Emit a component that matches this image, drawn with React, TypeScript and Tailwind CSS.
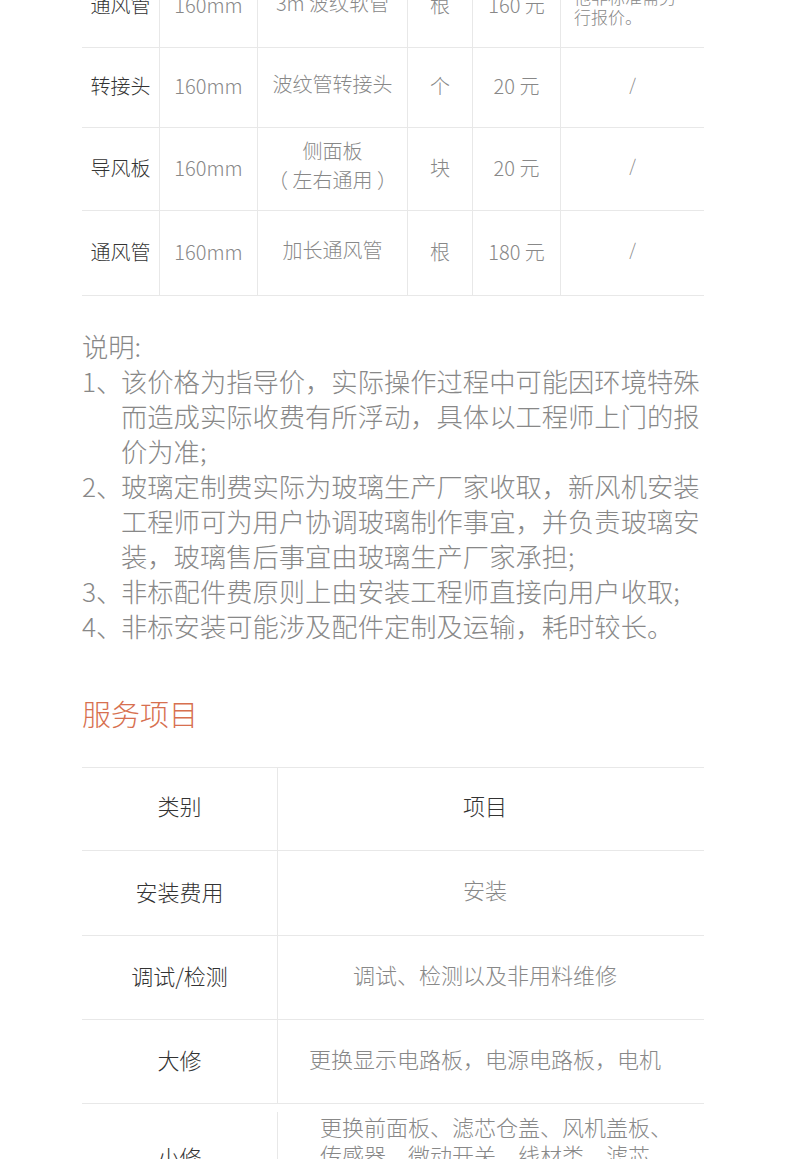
import React from 'react';

type PartRow = {
  name: string;
  size: string;
  desc: React.ReactNode;
  unit: string;
  price: string;
  note: string;
  height: string;
  noteClass?: string;
};

const partRows: PartRow[] = [
  {
    name: '通风管',
    size: '160mm',
    desc: '3m 波纹软管',
    unit: '根',
    price: '160 元',
    note: '如需加长，其他非标准需另行报价。',
    height: 'h-[83px]',
    noteClass: 'pb-[19px] justify-start text-left',
  },
  { name: '转接头', size: '160mm', desc: '波纹管转接头', unit: '个', price: '20 元', note: '/', height: 'h-[80px]' },
  {
    name: '导风板',
    size: '160mm',
    desc: (
      <>
        侧面板
        <br />
        （&nbsp;左右通用&nbsp;）
      </>
    ),
    unit: '块',
    price: '20 元',
    note: '/',
    height: 'h-[83px]',
  },
  { name: '通风管', size: '160mm', desc: '加长通风管', unit: '根', price: '180 元', note: '/', height: 'h-[85px]' },
];

const notes = [
  '该价格为指导价，实际操作过程中可能因环境特殊而造成实际收费有所浮动，具体以工程师上门的报价为准;',
  '玻璃定制费实际为玻璃生产厂家收取，新风机安装工程师可为用户协调玻璃制作事宜，并负责玻璃安装，玻璃售后事宜由玻璃生产厂家承担;',
  '非标配件费原则上由安装工程师直接向用户收取;',
  '非标安装可能涉及配件定制及运输，耗时较长。',
];

const services = [
  { type: '安装费用', item: '安装', row: 'h-[85px]', pad: 'pl-[16px] pr-[28px] text-center justify-center' },
  { type: '调试/检测', item: '调试、检测以及非用料维修', row: 'h-[84px]', pad: 'pl-[16px] pr-[28px] text-center justify-center' },
  { type: '大修', item: '更换显示电路板，电源电路板，电机', row: 'h-[84px]', pad: 'pl-[16px] pr-[28px] text-center justify-center' },
  {
    type: '小修',
    item: '更换前面板、滤芯仓盖、风机盖板、传感器、微动开关、线材类、滤芯、电源线等配件',
    row: 'py-2',
    pad: 'pl-[42px] pr-[25px] text-left justify-start',
  },
];

const cell = 'flex items-center border-l border-[#e8e8e8]';

const App: React.FC = () => {
  return (
    <div
      lang="zh-CN"
      className="w-[790px] min-h-screen overflow-hidden bg-white font-['Noto_Sans_CJK_SC',sans-serif] font-light"
    >
      <div className="ml-[82px] w-[622px] -mt-[35px] pb-20">
        {/* 配件价格表 */}
        <div className="text-[20px] text-[#888]">
          {partRows.map((r, i) => (
            <div
              key={i}
              className={`grid grid-cols-[77px_98px_150px_65px_88px_144px] border-b border-[#e8e8e8] ${r.height}`}
            >
              <div className="flex items-center justify-center pb-[3px] text-[#333]">{r.name}</div>
              <div className={`${cell} justify-center pb-[3px]`}>{r.size}</div>
              <div className={`${cell} justify-center text-center pb-2 leading-[29px]`}>
                <div>{r.desc}</div>
              </div>
              <div className={`${cell} justify-center pb-[3px]`}>{r.unit}</div>
              <div className={`${cell} justify-center pb-[3px]`}>{r.price}</div>
              <div
                className={`${cell} px-[13px] text-[17px] leading-[20px] ${r.noteClass ?? 'pb-2 justify-center'}`}
              >
                {r.note}
              </div>
            </div>
          ))}
        </div>

        {/* 说明 */}
        <div className="mt-[32px] text-[26.3px] leading-[35px] text-[#888]">
          <p>说明:</p>
          {notes.map((n, i) => (
            <div key={i} className="flex">
              <span className="w-[39px] shrink-0">{i + 1}、</span>
              <span>{n}</span>
            </div>
          ))}
        </div>

        <h2 className="mt-[50px] text-[29px] leading-[40px] text-[#d7704f]">服务项目</h2>

        {/* 服务项目表 */}
        <div className="mt-[34px] border-t border-[#e8e8e8] text-[22px]">
          <div className="grid h-[83px] grid-cols-[195px_1fr] border-b border-[#e8e8e8] text-[#333]">
            <div className="flex items-center justify-center pb-2">类别</div>
            <div className={`${cell} justify-center pl-[16px] pr-[28px] pb-2`}>项目</div>
          </div>
          {services.map((s, i) => (
            <div key={i} className={`grid grid-cols-[195px_1fr] border-b border-[#e8e8e8] ${s.row}`}>
              <div className="flex items-center justify-center pb-1 text-[#333]">{s.type}</div>
              <div className={`${cell} ${s.pad} pb-2 leading-[28px] text-[#888]`}>{s.item}</div>
            </div>
          ))}
        </div>
      </div>
    </div>
  );
};

export default App;
